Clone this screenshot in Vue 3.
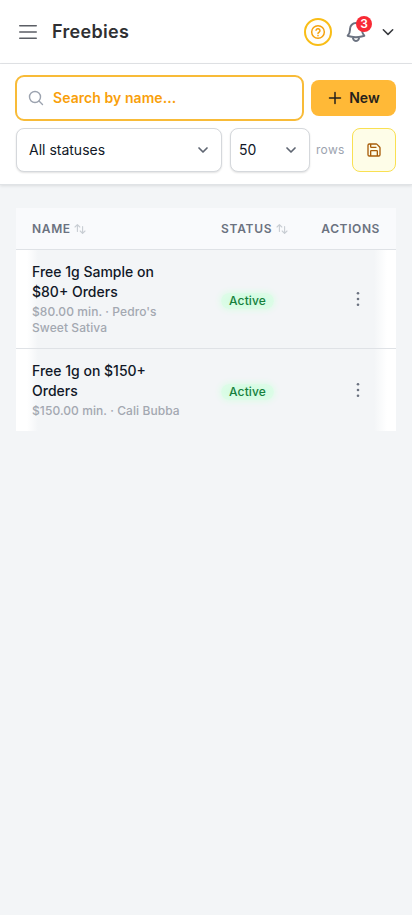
<script setup>
const rows = [
  { name: 'Free 1g Sample on $80+ Orders', detail: "$80.00 min. · Pedro's Sweet Sativa", status: 'Active' },
  { name: 'Free 1g on $150+ Orders', detail: '$150.00 min. · Cali Bubba', status: 'Active' },
]
</script>

<template>
  <div class="page">
    <header class="topbar">
      <svg class="menu" width="24" height="24" viewBox="0 0 24 24"><path d="M3.75 5.75h16.5M3.75 12h16.5M3.75 18.250h16.5" /></svg>
      <h1>Freebies</h1>
      <button class="help" aria-label="Help">
        <svg width="16" height="16" viewBox="0 0 24 24"><circle cx="12" cy="12" r="9.5" /><path d="M9 9.2a3.1 3.1 0 0 1 6 1c0 2-3 2.500-3 4M12 17.3v.2" /></svg>
      </button>
      <button class="bell" aria-label="Notifications">
        <svg width="24" height="24" viewBox="0 0 24 24"><path d="M14.857 17.082a23.85 23.85 0 0 0 5.454-1.31A8.97 8.97 0 0 1 18 9.75V9A6 6 0 0 0 6 9v.75a8.97 8.97 0 0 1-2.312 6.022c1.733.64 3.56 1.085 5.455 1.31m5.714 0a24.3 24.3 0 0 1-5.714 0m5.714 0a3 3 0 1 1-5.714 0" /></svg>
        <span class="count">3</span>
      </button>
      <svg class="chev user" width="16" height="16" viewBox="0 0 16 16"><path d="M3.300 5.700l4.700 4.700 4.700-4.700" /></svg>
    </header>

    <section class="tools">
      <div class="line">
        <label class="search">
          <svg width="16" height="16" viewBox="0 0 16 16"><circle cx="7" cy="7" r="5.5" /><path d="M11 11l3.500 3.500" /></svg>
          <span>Search by name...</span>
        </label>
        <button class="new">
          <svg width="16" height="16" viewBox="0 0 16 16"><path d="M8 2.500v11M2.500 8h11" /></svg>
          <span>New</span>
        </button>
      </div>
      <div class="line">
        <div class="select status"><span>All statuses</span><svg class="chev" width="12" height="12" viewBox="0 0 12 12"><path d="M2 4l4 4 4-4" /></svg></div>
        <div class="select size"><span>50</span><svg class="chev" width="12" height="12" viewBox="0 0 12 12"><path d="M2 4l4 4 4-4" /></svg></div>
        <span class="unit">rows</span>
        <button class="save" aria-label="Save">
          <svg width="16" height="16" viewBox="0 0 24 24"><path d="M15.2 3a2 2 0 0 1 1.4.6l3.8 3.8a2 2 0 0 1 .6 1.4V19a2 2 0 0 1-2 2H5a2 2 0 0 1-2-2V5a2 2 0 0 1 2-2zM17 21v-7a1 1 0 0 0-1-1H8a1 1 0 0 0-1 1v7M7 3v4a1 1 0 0 0 1 1h7" /></svg>
        </button>
      </div>
    </section>

    <main class="table">
      <div class="row head">
        <div class="th">NAME<svg class="sort" width="12" height="12" viewBox="0 0 12 12"><path d="M1 4l2.400-2.400L5.800 4M3.400 1.600V8.500M6.200 8l2.400 2.400L11 8M8.600 10.400V3.500" /></svg></div>
        <div class="th state-th">STATUS<svg class="sort" width="12" height="12" viewBox="0 0 12 12"><path d="M1 4l2.400-2.400L5.800 4M3.400 1.600V8.500M6.200 8l2.400 2.400L11 8M8.600 10.400V3.500" /></svg></div>
        <div class="th end">ACTIONS</div>
      </div>
      <div v-for="row in rows" :key="row.name" class="row item">
        <div class="name">
          <div class="title">{{ row.name }}</div>
          <div class="detail">{{ row.detail }}</div>
        </div>
        <div class="state"><span class="badge">{{ row.status }}</span></div>
        <button class="more" aria-label="More actions">
          <svg width="20" height="20" viewBox="0 0 20 20"><circle cx="10" cy="4.200" r="1.300" /><circle cx="10" cy="10" r="1.300" /><circle cx="10" cy="15.800" r="1.300" /></svg>
        </button>
      </div>
    </main>
  </div>
</template>

<style>
body { background: #f3f5f7; }
</style>

<style scoped>
.page { min-height: 915px; background: #f3f5f7; font-family: Inter, "Liberation Sans", sans-serif; font-size: 14px; line-height: 20px; color: #111827; }
.page * { box-sizing: border-box; }
svg { display: block; flex: none; fill: none; stroke: currentColor; stroke-width: 1.5; stroke-linecap: round; stroke-linejoin: round; }
button { font: inherit; padding: 0; margin: 0; border: 0; background: none; display: flex; align-items: center; justify-content: center; flex: none; }

.topbar { height: 64px; display: flex; align-items: center; padding: 0 16px; background: #fff; border-bottom: 1px solid #e2e4e7; }
.menu { color: #5b5e65; }
h1 { margin: 0 auto 0 12px; font-size: 18px; line-height: 28px; font-weight: 600; color: #303033; letter-spacing: 0.3px; }
.help { width: 28px; height: 28px; border: 2px solid #f9bd16; border-radius: 50%; color: #f5a00a; background: #fffefa; }
.help svg { stroke-width: 2.2; }
.bell { position: relative; margin-left: 12px; color: #6b7280; }
.bell svg { stroke-width: 2; }
.count { position: absolute; left: 12px; top: -4px; width: 16px; height: 16px; border-radius: 50%; background: #f82a35; color: #fff; font-size: 12px; line-height: 16px; font-weight: 600; text-align: center; }
.chev { color: #5f6672; stroke-width: 1.7; }
.user { margin-left: 12px; color: #36383d; stroke-width: 1.5; }

.tools { height: 121px; padding: 12px 16px; background: #fff; border-bottom: 1px solid #e0e3e6; box-shadow: 0 1px 3px rgba(0, 0, 0, 0.1); display: flex; flex-direction: column; gap: 8px; }
.line { display: flex; align-items: center; gap: 8px; height: 44px; }
.search { flex: 1; height: 46px; margin: 0 -1px; display: flex; align-items: center; gap: 9px; padding: 0 11px; border: 2px solid #f8bb38; border-radius: 9px; color: #f99f0b; font-weight: 600; letter-spacing: 0.06px; }
.search svg { color: #9ca3af; stroke-width: 1.4; }
.new { width: 85px; height: 36px; gap: 6px; border-radius: 8px; background: #ffb937; color: #25211c; font-weight: 600; letter-spacing: 0.1px; }
.select { flex: none; height: 44px; display: flex; align-items: center; justify-content: space-between; border: 1px solid #d5d8dc; border-radius: 8px; background: #fff; box-shadow: 0 1px 2px rgba(0, 0, 0, 0.12); }
.status { width: 206px; padding: 0 12px; }
.size { width: 80px; padding: 0 12px 0 8px; }
.unit { width: 28px; flex: none; margin: 0 -8px 0 -2px; font-size: 12px; color: #9ca3af; letter-spacing: 0.3px; }
.save { width: 44px; height: 44px; margin-left: auto; border: 1px solid #f9e052; border-radius: 8px; background: #fefde8; color: #a85d0a; }
.save svg { stroke-width: 2; }

.table { margin: 23px 16px 0; }
.row { display: grid; grid-template-columns: 189px 100px 1fr; align-items: center; padding: 0 16px; }
.head { height: 42px; background: #f9fafc; border-bottom: 1px solid #dfe2e6; }
.th { display: flex; align-items: center; gap: 3px; font-size: 12px; line-height: 16px; font-weight: 600; letter-spacing: 0.65px; color: #6b7280; }
.state-th { gap: 4px; letter-spacing: 0.75px; }
.end { justify-content: flex-end; letter-spacing: 0.6px; }
.sort { color: #c8cdd3; stroke-width: 1.1; }
.item { padding: 12px 16px; background: linear-gradient(90deg, #fff 0, #fff 11px, #f3f5f7 22px, #f3f5f7 358px, #fff 371px); }
.item + .item { border-top: 1px solid #dfe2e6; }
.name { width: 157px; }
.title { font-weight: 500; }
.detail { margin-top: 2px; font-size: 12px; line-height: 16px; font-weight: 500; color: #a3a8b1; letter-spacing: 0.08px; }
.state { padding-top: 2px; }
.badge { display: inline-block; padding: 0 8px; border-radius: 8px; background: radial-gradient(closest-side, #d3fce1 50%, #dcfce7); box-shadow: 0 0 6px 1px #dcfce7; color: #15803d; font-size: 12px; line-height: 16px; font-weight: 500; letter-spacing: 0.15px; }
.more { justify-self: end; margin-right: 12px; color: #6b7280; }
.more svg { fill: currentColor; stroke: none; }
</style>
